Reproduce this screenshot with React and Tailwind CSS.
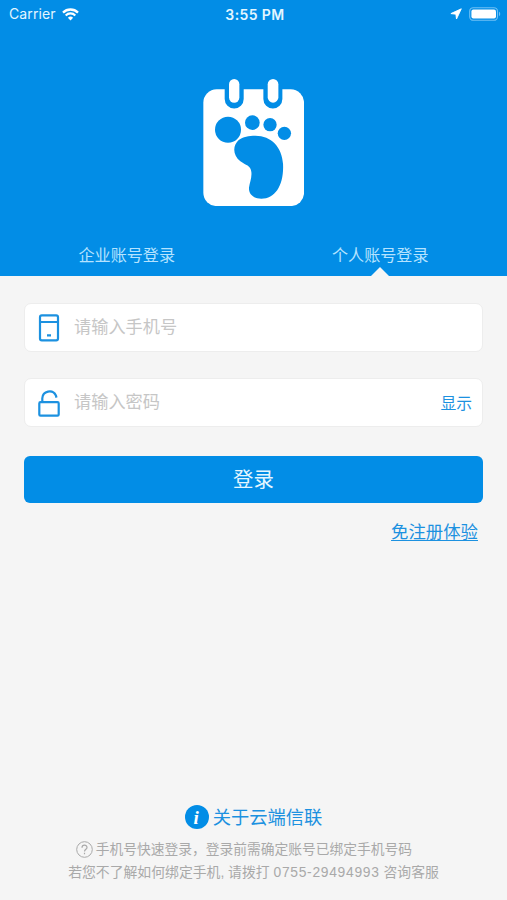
const stack = "font-['Inter','Noto_Sans_CJK_SC',sans-serif]";
const cjk = "font-['Liberation_Sans','Noto_Sans_CJK_SC',sans-serif]";

function StatusBar() {
  return (
    <div className="grid h-7 grid-cols-3 items-center pl-[9px] pr-[6px] text-[#e4f6ff]">
      <div className="flex items-center gap-[6px]">
        <span className="text-[14px] leading-none tracking-[0.1px]">Carrier</span>
        <svg width="17" height="13" viewBox="0 0 17 13" fill="none" stroke="#fff">
          <path d="M1 4.6a10.6 10.6 0 0 1 15 0" strokeWidth="2.3" />
          <path d="M3.7 7.4a6.8 6.8 0 0 1 9.6 0" strokeWidth="2.1" />
          <path d="M8.5 12.4 5.9 9.8a3.7 3.7 0 0 1 5.2 0z" fill="#fff" stroke="none" />
        </svg>
      </div>
      <span className="pt-px text-center text-[14px] font-semibold leading-none tracking-[0.4px]">
        3:55 PM
      </span>
      <div className="flex items-center justify-end gap-[7px]">
        <svg width="12" height="12" viewBox="0 0 12 12" fill="#fff" stroke="#fff" strokeLinejoin="round">
          <path d="M11.3.8.9 5.6 5.9 6.2 6.5 11z" strokeWidth=".9" />
        </svg>
        <svg width="32" height="14" viewBox="0 0 32 14">
          <rect x=".7" y=".7" width="27.8" height="12.6" rx="3.6" fill="none" stroke="#6fc0f5" strokeWidth="1.1" />
          <rect x="2.4" y="2.4" width="24.6" height="9.2" rx="2" fill="#fff" />
          <path d="M30 4.8c1.6.6 1.6 3.8 0 4.4z" fill="#6fc0f5" />
        </svg>
      </div>
    </div>
  );
}

function Logo() {
  return (
    <svg className="mt-[51px]" width="101.4" height="127.4" viewBox="40 27 304 382">
      <rect x="41" y="58" width="302" height="350" rx="40" fill="#fff" />
      <path
        d="M105 56v31a28.5 28.5 0 0 0 57 0V56zM221 56v31a28.5 28.5 0 0 0 57 0V56z"
        fill="#028de6"
      />
      <rect x="118" y="27" width="31" height="71" rx="15.5" fill="#fff" />
      <rect x="234" y="27" width="32" height="71" rx="16" fill="#fff" />
      <g fill="#028de6">
        <circle cx="115" cy="179" r="39" />
        <circle cx="188" cy="158" r="22" />
        <circle cx="241" cy="164" r="20" />
        <circle cx="284" cy="190" r="20" />
        <path d="M197 197C245 197 277 231 280 282C283 345 257 386 215 386C190 386 176 371 178 352C180 338 187 323 185 306C183 286 168 286 152 274C128 253 129 227 147 210C160 200 177 197 197 197z" />
      </g>
    </svg>
  );
}

function PhoneIcon() {
  return (
    <svg width="22" height="28" viewBox="0 0 22 28" fill="none" stroke="#1c91e0" strokeWidth="2.2">
      <rect x="2" y="1.4" width="18" height="25" rx="1.8" />
      <path d="M2 8h18M9 21.4h4" />
    </svg>
  );
}

function LockIcon() {
  return (
    <svg width="22" height="28" viewBox="0 0 22 28" fill="none" stroke="#1c91e0" strokeWidth="2.2">
      <rect x="1.3" y="13.2" width="19.4" height="13.4" rx="1.2" />
      <path d="M4.3 13V9.2A7.2 7.2 0 0 1 17.9 6.4L18.5 8.6" />
    </svg>
  );
}

function Field({ icon, placeholder, action }) {
  return (
    <div className="flex h-[49px] items-center rounded-[7px] border border-[#ededed] bg-white pl-[13px] pr-[10px]">
      {icon}
      <span className="ml-[14px] flex-1 text-[17.2px] leading-none text-[#c6c6c6]">
        {placeholder}
      </span>
      {action && (
        <button className="pt-[2px] text-[15.8px] leading-none text-[#1c91e0]">{action}</button>
      )}
    </div>
  );
}

export default function App() {
  return (
    <div className={`flex h-[900px] w-full flex-col bg-[#f5f5f5] ${cjk}`}>
      <header className="flex h-[276px] flex-col bg-[#028de6]">
        <div className={stack}>
          <StatusBar />
        </div>
        <div className="flex justify-center">
          <Logo />
        </div>
        <nav className="mt-auto grid h-[42px] grid-cols-2 text-center text-[16.1px] leading-[42px] text-[#b5e3ff]">
          <span>企业账号登录</span>
          <span className="relative">
            个人账号登录
            <svg className="absolute bottom-0 left-1/2 -translate-x-1/2" width="18" height="9" viewBox="0 0 18 9">
              <path d="M0 9 9 0l9 9z" fill="#f5f5f5" />
            </svg>
          </span>
        </nav>
      </header>

      <main className="flex flex-col px-6 pt-[27px]">
        <Field icon={<PhoneIcon />} placeholder="请输入手机号" />
        <div className="mt-[26px]">
          <Field icon={<LockIcon />} placeholder="请输入密码" action="显示" />
        </div>
        <button className="mt-[29px] h-[47px] rounded-[6px] bg-[#028de6] pt-[2px] text-[20.4px] text-[#e4f6ff]">
          登录
        </button>
        <a className="mr-[5px] mt-[17px] self-end text-[17.4px] leading-6 text-[#1c91e0] underline decoration-1 underline-offset-2">
          免注册体验
        </a>
      </main>

      <footer className="mt-auto flex flex-col items-center pb-4 text-[#a9a9a9]">
        <div className="flex h-6 items-center gap-1 text-[18.3px] leading-none text-[#1c91e0]">
          <span className="flex size-6 items-center justify-center rounded-full bg-[#028de6] pr-px font-['Liberation_Serif',serif] text-[19px] font-bold italic text-white">
            i
          </span>
          <span className="pt-[2px]">关于云端信联</span>
        </div>
        <p className="mt-[9px] flex h-[23px] items-center gap-[3px] pr-[19px] text-[13.75px] leading-none">
          <svg width="17" height="17" viewBox="0 0 17 17" fill="none" stroke="#a9a9a9" strokeWidth="1">
            <circle cx="8.5" cy="8.5" r="7.8" />
            <path d="M6 6.7C6 3.3 11 3.3 11 6.4 11 8.3 8.5 8.3 8.5 10.6M8.5 11.8v1.4" strokeWidth="1.2" />
          </svg>
          手机号快速登录，登录前需确定账号已绑定手机号码
        </p>
        <p className="h-[23px] whitespace-nowrap text-[13.85px] leading-[23px]">
          若您不了解如何绑定手机, 请拨打 <span className="tracking-[0.7px]">0755-29494993</span> 咨询客服
        </p>
      </footer>
    </div>
  );
}
